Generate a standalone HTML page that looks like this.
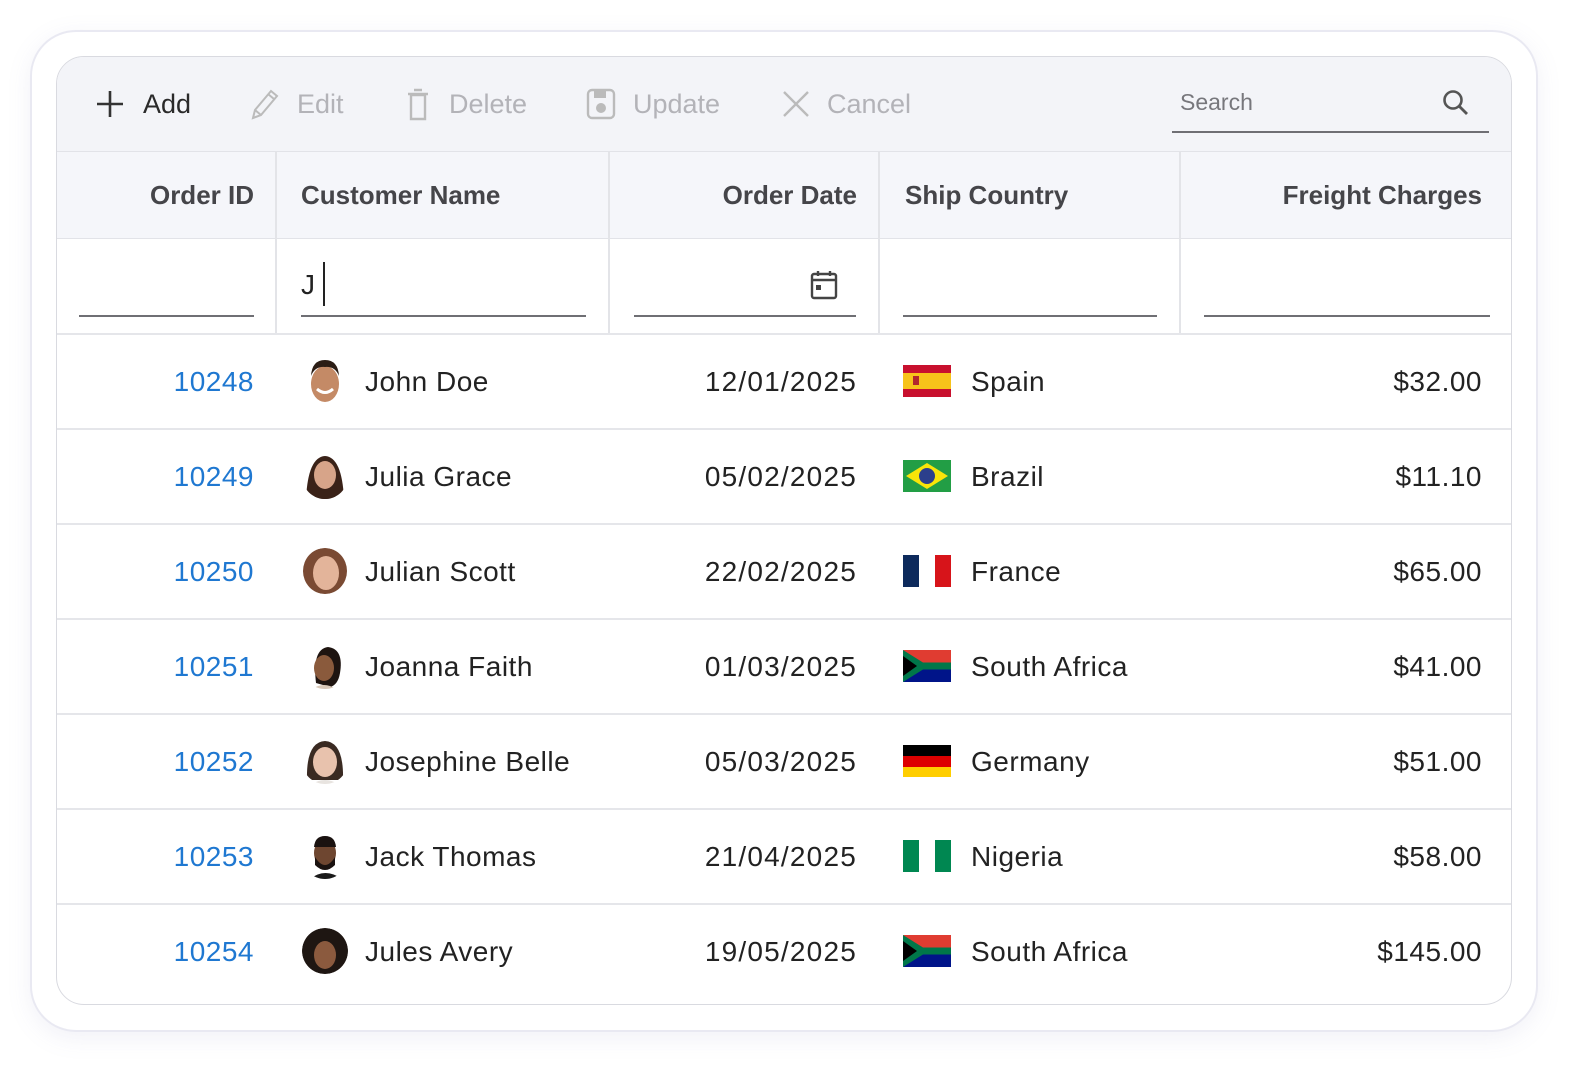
<!DOCTYPE html>
<html><head><meta charset="utf-8">
<style>
*{box-sizing:border-box;margin:0;padding:0}
body{width:1584px;height:1072px;background:#fff;font-family:"Liberation Sans",Arial,sans-serif;position:relative;overflow:hidden}
.outer{position:absolute;left:30px;top:30px;width:1508px;height:1002px;border:2px solid #e9e9f2;border-radius:46px;background:#fff;box-shadow:0 6px 24px rgba(140,140,190,0.12)}
.grid{position:absolute;left:56px;top:56px;width:1456px;height:949px;border:1.5px solid #d9dae0;border-radius:28px;overflow:hidden;background:#fff}
.tb{position:absolute;left:0;top:0;width:100%;height:95px;background:#f3f4f8;border-bottom:1.5px solid #e2e3e8}
.abs{position:absolute}
.tbt{position:absolute;top:30px;font-size:27px;color:#b3b3b8;line-height:34px}
.hdr{position:absolute;left:0;top:95px;width:100%;height:87px;background:#f5f6fa;border-bottom:1.5px solid #e2e3e8}
.vl{position:absolute;top:95px;width:1.5px;height:182px;background:#e3e4e8}
.ht{position:absolute;top:95px;height:87px;line-height:87px;font-size:26px;font-weight:bold;color:#454549}
.fl{position:absolute;top:258px;height:2px;background:#6f6f74}
.row{position:absolute;left:0;width:100%;height:95px;border-top:2px solid #e5e6ea}
.c{position:absolute;top:0;height:93px;line-height:93px;font-size:28px;letter-spacing:0.5px;color:#222}
.id{color:#1f78d1;right:1257px}
.nm{left:308px}
.dt{right:654px;letter-spacing:1.2px}
.ct{left:914px}
.fr{right:29px}
.av{position:absolute;left:245px;top:23px;width:46px;height:46px;border-radius:50%;overflow:hidden}
.fg{position:absolute;left:846px;top:30px;width:48px;height:32px;overflow:hidden}
</style></head><body>
<div class="outer"></div>
<div class="grid">
 <div class="tb"></div>
 <svg class="abs" style="left:38px;top:32px" width="30" height="30" viewBox="0 0 30 30"><path d="M15 2V28M2 15H28" stroke="#333" stroke-width="2.6"/></svg>
 <div class="tbt" style="left:86px;color:#2a2a2a">Add</div>
 <svg class="abs" style="left:192px;top:30px" width="32" height="34" viewBox="0 0 32 34"><path d="M4 31L6 23L22 4L28 9L12 28Z M6 23L12 28M19 7L25 12" stroke="#bbb" stroke-width="2" fill="none"/></svg>
 <div class="tbt" style="left:240px">Edit</div>
 <svg class="abs" style="left:348px;top:29px" width="26" height="36" viewBox="0 0 26 36"><path d="M6 9H20V33H6Z M3 8H23 M9 4H17" stroke="#bbb" stroke-width="2.4" fill="none"/></svg>
 <div class="tbt" style="left:392px">Delete</div>
 <svg class="abs" style="left:528px;top:30px" width="32" height="34" viewBox="0 0 32 34"><rect x="3" y="3" width="26" height="28" rx="4" stroke="#bbb" stroke-width="2.4" fill="none"/><rect x="9" y="4" width="12" height="7" fill="#bbb"/><circle cx="16" cy="21" r="5" fill="#bbb"/></svg>
 <div class="tbt" style="left:576px">Update</div>
 <svg class="abs" style="left:724px;top:32px" width="30" height="30" viewBox="0 0 30 30"><path d="M3 3L27 27M27 3L3 27" stroke="#bbb" stroke-width="2.4"/></svg>
 <div class="tbt" style="left:770px">Cancel</div>
 <div class="abs" style="left:1123px;top:32px;font-size:23px;color:#77777c">Search</div>
 <svg class="abs" style="left:1384px;top:31px" width="30" height="30" viewBox="0 0 30 30"><circle cx="12" cy="12" r="8.5" stroke="#555" stroke-width="2.6" fill="none"/><path d="M18 18L26 26" stroke="#555" stroke-width="2.8"/></svg>
 <div class="abs" style="left:1115px;top:74px;width:317px;height:2px;background:#6f6f74"></div>

 <div class="hdr"></div>
 <div class="vl" style="left:218px"></div>
 <div class="vl" style="left:551px"></div>
 <div class="vl" style="left:821px"></div>
 <div class="vl" style="left:1122px"></div>
 <div class="ht" style="right:1257px">Order ID</div>
 <div class="ht" style="left:244px">Customer Name</div>
 <div class="ht" style="right:654px">Order Date</div>
 <div class="ht" style="left:848px">Ship Country</div>
 <div class="ht" style="right:29px">Freight Charges</div>

 <div class="fl" style="left:22px;width:175px"></div>
 <div class="fl" style="left:244px;width:285px"></div>
 <div class="fl" style="left:577px;width:222px"></div>
 <div class="fl" style="left:846px;width:254px"></div>
 <div class="fl" style="left:1147px;width:286px"></div>
 <div class="abs" style="left:244px;top:212px;font-size:28px;color:#222">J</div>
 <div class="abs" style="left:266px;top:205px;width:2px;height:44px;background:#222"></div>
 <svg class="abs" style="left:752px;top:212px" width="30" height="32" viewBox="0 0 30 32"><rect x="3" y="5" width="24" height="24" rx="2" stroke="#444" stroke-width="2.4" fill="none"/><path d="M3 11H27M9 2V7M21 2V7" stroke="#444" stroke-width="2.4"/><rect x="7" y="16" width="5" height="5" fill="#444"/></svg>

 <div class="row" style="top:276px">
  <div class="c id">10248</div>
  <div class="av"><svg width="46" height="46"><rect width="46" height="46" fill="#fff"/><ellipse cx="23" cy="26" rx="14" ry="18" fill="#c48a66"/><path d="M9 18Q10 2 23 2Q36 2 37 18Q33 8 23 9Q13 8 9 18Z" fill="#2b1d15"/><path d="M15 31Q23 38 31 31" stroke="#fff" stroke-width="3" fill="none"/></svg></div>
  <div class="c nm">John Doe</div>
  <div class="c dt">12/01/2025</div>
  <div class="fg"><svg width="48" height="32"><rect width="48" height="32" fill="#c8102e"/><rect y="8" width="48" height="16" fill="#f7c31a"/><rect x="10" y="11" width="6" height="9" fill="#b2262e"/></svg></div>
  <div class="c ct">Spain</div>
  <div class="c fr">$32.00</div>
 </div>
 <div class="row" style="top:371px">
  <div class="c id">10249</div>
  <div class="av"><svg width="46" height="46"><rect width="46" height="46" fill="#fff"/><path d="M4 46Q6 4 23 3Q40 4 42 46Z" fill="#3a2218"/><ellipse cx="23" cy="22" rx="11" ry="14" fill="#d7a489"/><path d="M10 46Q23 34 36 46Z" fill="#3a2218"/></svg></div>
  <div class="c nm">Julia Grace</div>
  <div class="c dt">05/02/2025</div>
  <div class="fg"><svg width="48" height="32"><rect width="48" height="32" fill="#229e45"/><path d="M24 3L45 16L24 29L3 16Z" fill="#f8e509"/><circle cx="24" cy="16" r="8" fill="#2b3f8c"/></svg></div>
  <div class="c ct">Brazil</div>
  <div class="c fr">$11.10</div>
 </div>
 <div class="row" style="top:466px">
  <div class="c id">10250</div>
  <div class="av"><svg width="46" height="46"><rect width="46" height="46" fill="#fff"/><ellipse cx="23" cy="23" rx="22" ry="23" fill="#7a4a33"/><ellipse cx="24" cy="25" rx="13" ry="17" fill="#e3b49a"/></svg></div>
  <div class="c nm">Julian Scott</div>
  <div class="c dt">22/02/2025</div>
  <div class="fg"><svg width="48" height="32"><rect width="48" height="32" fill="#fff"/><rect width="16" height="32" fill="#0d2a5c"/><rect x="32" width="16" height="32" fill="#d7141a"/></svg></div>
  <div class="c ct">France</div>
  <div class="c fr">$65.00</div>
 </div>
 <div class="row" style="top:561px">
  <div class="c id">10251</div>
  <div class="av"><svg width="46" height="46"><rect width="46" height="46" fill="#fff"/><path d="M14 40Q10 6 26 4Q42 6 38 30Q36 42 28 44Z" fill="#1e1410"/><ellipse cx="22" cy="25" rx="10" ry="13" fill="#8a5a3c"/><path d="M10 46Q22 38 34 46Z" fill="#d8c8b8"/></svg></div>
  <div class="c nm">Joanna Faith</div>
  <div class="c dt">01/03/2025</div>
  <div class="fg"><svg width="48" height="32"><rect width="48" height="16" fill="#e03c31"/><rect y="16" width="48" height="16" fill="#001489"/><path d="M0 0L20 16L0 32" fill="#fff"/><path d="M0 3L17 16L0 29" fill="#ffb81c"/><path d="M0 0L20 12.5H48V19.5H20L0 32" fill="#007749"/><path d="M0 6L14 16L0 26Z" fill="#000"/></svg></div>
  <div class="c ct">South Africa</div>
  <div class="c fr">$41.00</div>
 </div>
 <div class="row" style="top:656px">
  <div class="c id">10252</div>
  <div class="av"><svg width="46" height="46"><rect width="46" height="46" fill="#fff"/><path d="M5 42Q4 4 23 3Q42 4 41 42Z" fill="#3a2a22"/><ellipse cx="23" cy="24" rx="12" ry="15" fill="#e8c2ad"/><path d="M10 46Q23 38 36 46Z" fill="#e8e4e0"/></svg></div>
  <div class="c nm">Josephine Belle</div>
  <div class="c dt">05/03/2025</div>
  <div class="fg"><svg width="48" height="32"><rect width="48" height="11" fill="#000"/><rect y="11" width="48" height="11" fill="#dd0000"/><rect y="22" width="48" height="10" fill="#ffce00"/></svg></div>
  <div class="c ct">Germany</div>
  <div class="c fr">$51.00</div>
 </div>
 <div class="row" style="top:751px">
  <div class="c id">10253</div>
  <div class="av"><svg width="46" height="46"><rect width="46" height="46" fill="#fff"/><ellipse cx="23" cy="20" rx="11" ry="14" fill="#6e4630"/><path d="M12 14Q13 3 23 3Q33 3 34 14Z" fill="#1a1210"/><path d="M13 24Q23 40 33 24L33 32Q23 42 13 32Z" fill="#1a1210"/><path d="M8 46Q23 34 40 46Z" fill="#1a1a1a"/></svg></div>
  <div class="c nm">Jack Thomas</div>
  <div class="c dt">21/04/2025</div>
  <div class="fg"><svg width="48" height="32"><rect width="48" height="32" fill="#fff"/><rect width="16" height="32" fill="#008751"/><rect x="32" width="16" height="32" fill="#008751"/></svg></div>
  <div class="c ct">Nigeria</div>
  <div class="c fr">$58.00</div>
 </div>
 <div class="row" style="top:846px">
  <div class="c id">10254</div>
  <div class="av"><svg width="46" height="46"><circle cx="23" cy="23" r="23" fill="#1e1612"/><ellipse cx="23" cy="27" rx="11" ry="14" fill="#8b5a3e"/></svg></div>
  <div class="c nm">Jules Avery</div>
  <div class="c dt">19/05/2025</div>
  <div class="fg"><svg width="48" height="32"><rect width="48" height="16" fill="#e03c31"/><rect y="16" width="48" height="16" fill="#001489"/><path d="M0 0L20 16L0 32" fill="#fff"/><path d="M0 3L17 16L0 29" fill="#ffb81c"/><path d="M0 0L20 12.5H48V19.5H20L0 32" fill="#007749"/><path d="M0 6L14 16L0 26Z" fill="#000"/></svg></div>
  <div class="c ct">South Africa</div>
  <div class="c fr">$145.00</div>
 </div>
</div>
</body></html>
